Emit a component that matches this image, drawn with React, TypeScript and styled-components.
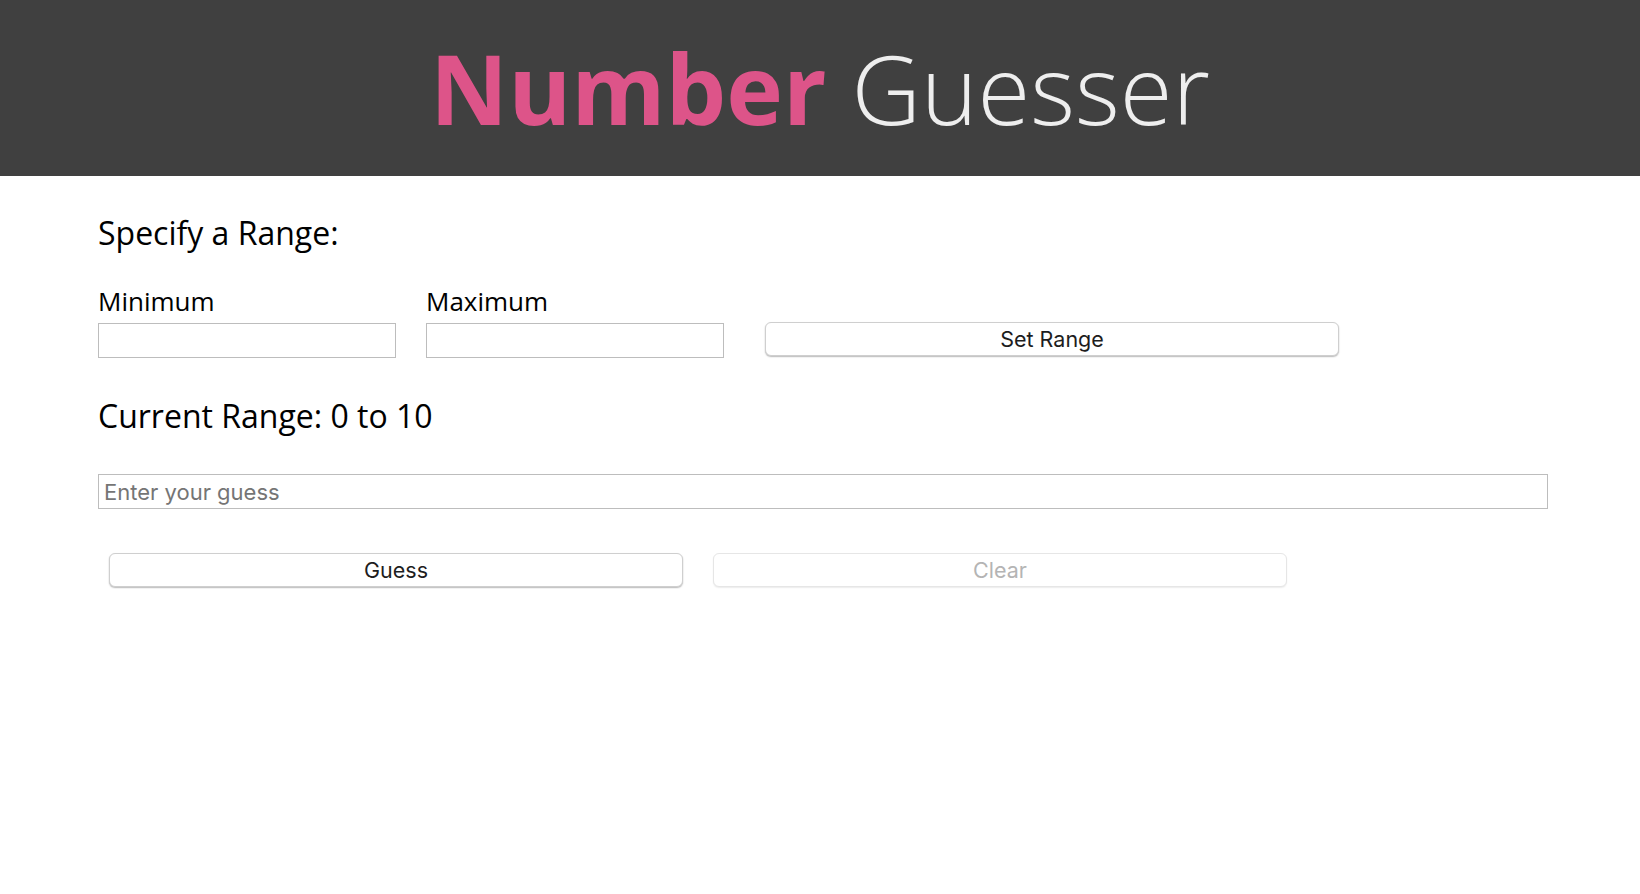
import React from "react";
import styled, { createGlobalStyle } from "styled-components";

const Global = createGlobalStyle`
  html, body { margin: 0; padding: 0; background: #ffffff; }
  body { font-family: "Open Sans", sans-serif; color: #000; }
  * { box-sizing: border-box; }
`;

const Header = styled.header`
  height: 176px;
  background: #404040;
  display: flex;
  align-items: center;
  justify-content: center;
`;

const Title = styled.h1`
  margin: 0;
  font-family: "Open Sans", sans-serif;
  font-size: 96px;
  line-height: 1;
  color: #eeeeee;
  font-weight: 300;
  letter-spacing: 0;
`;

const Accent = styled.span`
  color: #dd5489;
  font-weight: 700;
`;

const Main = styled.main`
  padding: 0 92px 0 98px;
  display: flex;
  flex-direction: column;
`;

const Heading = styled.h2<{ $top: number }>`
  margin: ${(p) => p.$top}px 0 0;
  font-family: "Open Sans", sans-serif;
  font-size: 32px;
  font-weight: 400;
  line-height: 44px;
`;

const RangeRow = styled.div`
  display: flex;
  align-items: flex-end;
  margin-top: 31px;
`;

const Field = styled.div<{ $gap: number }>`
  display: flex;
  flex-direction: column;
  margin-right: ${(p) => p.$gap}px;
`;

const Label = styled.label`
  font-family: "Open Sans", sans-serif;
  font-size: 26px;
  line-height: 30px;
  margin-bottom: 7px;
`;

const TextInput = styled.input<{ $width?: string }>`
  width: ${(p) => p.$width ?? "298px"};
  height: 35px;
  border: 1px solid #bdbdbd;
  border-radius: 0;
  padding: 0 5px;
  font-family: "Inter", "Liberation Sans", sans-serif;
  font-size: 22px;
  color: #222;
  background: #fff;
  outline: none;
  &::placeholder { color: #757575; }
`;

const Button = styled.button`
  width: 574px;
  height: 34px;
  border: 1px solid #cfcfcf;
  border-radius: 6px;
  background: #ffffff;
  box-shadow: 0 1px 1.5px rgba(0, 0, 0, 0.28);
  font-family: "Inter", "Liberation Sans", sans-serif;
  font-size: 21.5px;
  color: #1d1d1d;
  padding: 0;
  cursor: pointer;
  margin-bottom: 2px;
  &:disabled {
    color: #b4b4b4;
    border-color: #e6e6e6;
    box-shadow: 0 1px 1.5px rgba(0, 0, 0, 0.08);
    cursor: default;
  }
`;

const GuessWrap = styled.div`
  margin-top: 36px;
`;

const ButtonRow = styled.div`
  display: flex;
  gap: 30px;
  margin-top: 44px;
  padding-left: 11px;
`;

export default function App() {
  return (
    <>
      <Global />
      <Header>
        <Title>
          <Accent>Number</Accent> Guesser
        </Title>
      </Header>
      <Main>
        <Heading $top={35}>Specify a Range:</Heading>
        <RangeRow>
          <Field $gap={30}>
            <Label>Minimum</Label>
            <TextInput type="text" />
          </Field>
          <Field $gap={41}>
            <Label>Maximum</Label>
            <TextInput type="text" />
          </Field>
          <Button type="button">Set Range</Button>
        </RangeRow>
        <Heading $top={36}>Current Range: 0 to 10</Heading>
        <GuessWrap>
          <TextInput type="text" placeholder="Enter your guess" $width="100%" />
        </GuessWrap>
        <ButtonRow>
          <Button type="button">Guess</Button>
          <Button type="button" disabled>
            Clear
          </Button>
        </ButtonRow>
      </Main>
    </>
  );
}
